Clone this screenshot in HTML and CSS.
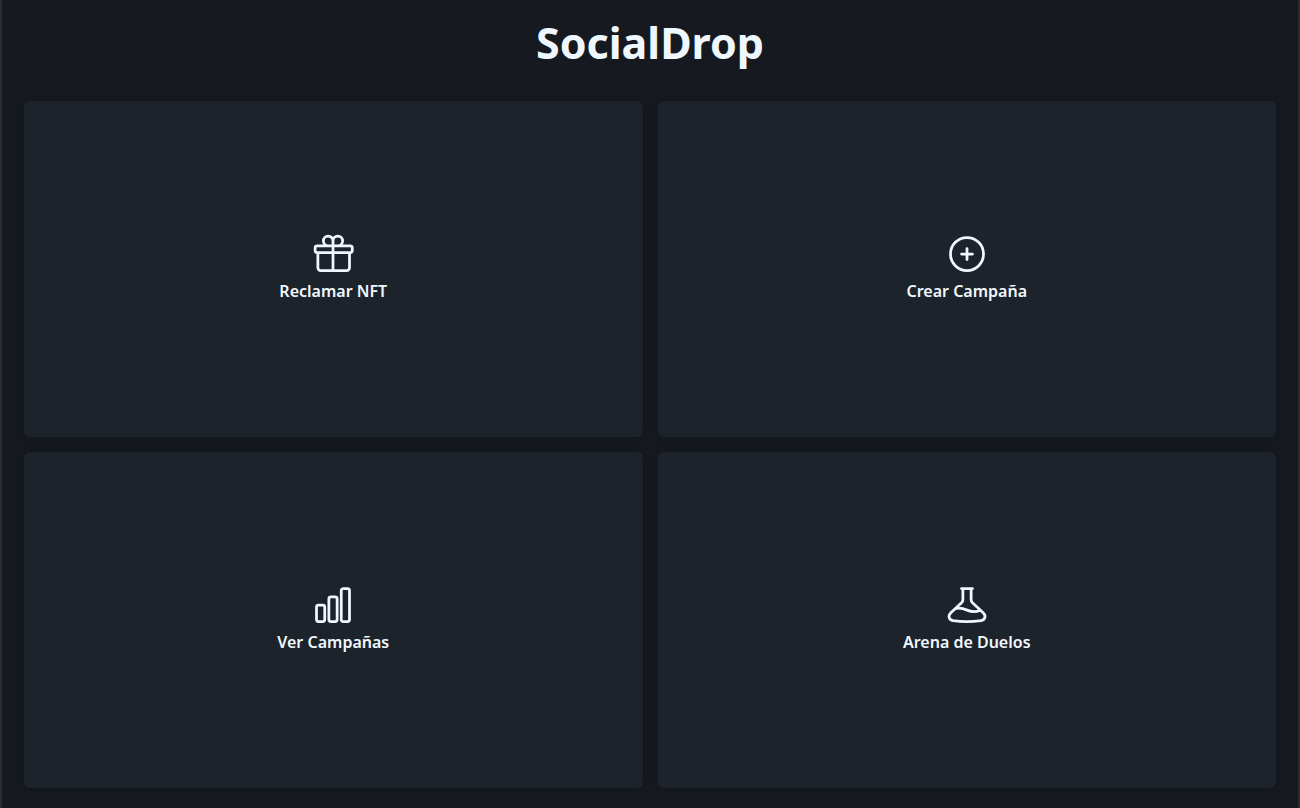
FILE: index.html
```html
<!DOCTYPE html>
<html lang="es">
<head>
<meta charset="utf-8">
<meta name="viewport" content="width=device-width, initial-scale=1">
<title>SocialDrop</title>
<link rel="stylesheet" href="styles.css">
</head>
<body>
<main class="app">
  <h1 class="title">SocialDrop</h1>
  <nav class="menu">
    <button class="card" type="button">
      <svg class="icon" viewBox="0 0 24 24" aria-hidden="true"><path d="M21 11.25v8.25a1.5 1.5 0 0 1-1.5 1.5H5.25a1.5 1.5 0 0 1-1.5-1.5v-8.25M12 4.875A2.625 2.625 0 1 0 9.375 7.5H12m0-2.625V7.5m0-2.625A2.625 2.625 0 1 1 14.625 7.5H12m0 0V21m-8.625-9.75h18c.621 0 1.125-.504 1.125-1.125v-1.5c0-.621-.504-1.125-1.125-1.125h-18c-.621 0-1.125.504-1.125 1.125v1.5c0 .621.504 1.125 1.125 1.125Z"/></svg>
      <span>Reclamar NFT</span>
    </button>
    <button class="card" type="button">
      <svg class="icon" viewBox="0 0 24 24" aria-hidden="true"><path d="M12 9v6m3-3H9m12 0a9 9 0 1 1-18 0 9 9 0 0 1 18 0Z"/></svg>
      <span>Crear Campaña</span>
    </button>
    <button class="card" type="button">
      <svg class="icon" viewBox="0 0 24 24" aria-hidden="true"><path d="M3 13.125C3 12.504 3.504 12 4.125 12h2.25c.621 0 1.125.504 1.125 1.125v6.75C7.5 20.496 6.996 21 6.375 21h-2.25A1.125 1.125 0 0 1 3 19.875v-6.75ZM9.75 8.625c0-.621.504-1.125 1.125-1.125h2.25c.621 0 1.125.504 1.125 1.125v11.25c0 .621-.504 1.125-1.125 1.125h-2.25a1.125 1.125 0 0 1-1.125-1.125V8.625ZM16.5 4.125c0-.621.504-1.125 1.125-1.125h2.25C20.496 3 21 3.504 21 4.125v15.75c0 .621-.504 1.125-1.125 1.125h-2.25a1.125 1.125 0 0 1-1.125-1.125V4.125Z"/></svg>
      <span>Ver Campañas</span>
    </button>
    <button class="card" type="button">
      <svg class="icon" viewBox="0 0 24 24" aria-hidden="true"><path d="M9 3h6M9.75 3v6.2c0 .5-.2 1-.6 1.4L3.2 16.2c-1.8 1.7-1.1 3.9 1.2 4.3 5 .75 10.2.75 15.2 0 2.3-.4 3-2.6 1.2-4.3l-5.95-5.6c-.4-.4-.6-.9-.6-1.4V3M5.7 14c2.3-.6 4.2-.1 6.3.8s4.6 1.3 7.2.1"/></svg>
      <span>Arena de Duelos</span>
    </button>
  </nav>
</main>
</body>
</html>
```
FILE: styles.css
```css
* {
  box-sizing: border-box;
}

body {
  margin: 0;
  background: #161a20;
  color: #f0f8ff;
  font-family: "Noto Sans", "Open Sans", sans-serif;
}

.app {
  display: flex;
  flex-direction: column;
  min-height: 100vh;
  padding: 13px 22px 20px;
  border: solid #2a2f2b;
  border-width: 0 2px;
}

.title {
  margin: 0 0 28px;
  font-size: 43px;
  line-height: 60px;
  font-weight: 700;
  text-align: center;
}

.menu {
  flex: 1;
  display: grid;
  grid-template-columns: 1fr 1fr;
  grid-auto-rows: 1fr;
  gap: 15px;
}

.card {
  display: flex;
  flex-direction: column;
  align-items: center;
  justify-content: center;
  gap: 3px;
  padding: 16px 16px 20px;
  border: 0;
  border-radius: 6px;
  background: #1d232a;
  box-shadow: 0 0 10px rgba(0, 0, 0, 0.2);
  color: inherit;
  font: 600 16px/24px "Noto Sans", "Open Sans", sans-serif;
  cursor: pointer;
}

.icon {
  width: 44px;
  height: 44px;
  fill: none;
  stroke: currentColor;
  stroke-width: 1.5;
  stroke-linecap: round;
  stroke-linejoin: round;
}
```
